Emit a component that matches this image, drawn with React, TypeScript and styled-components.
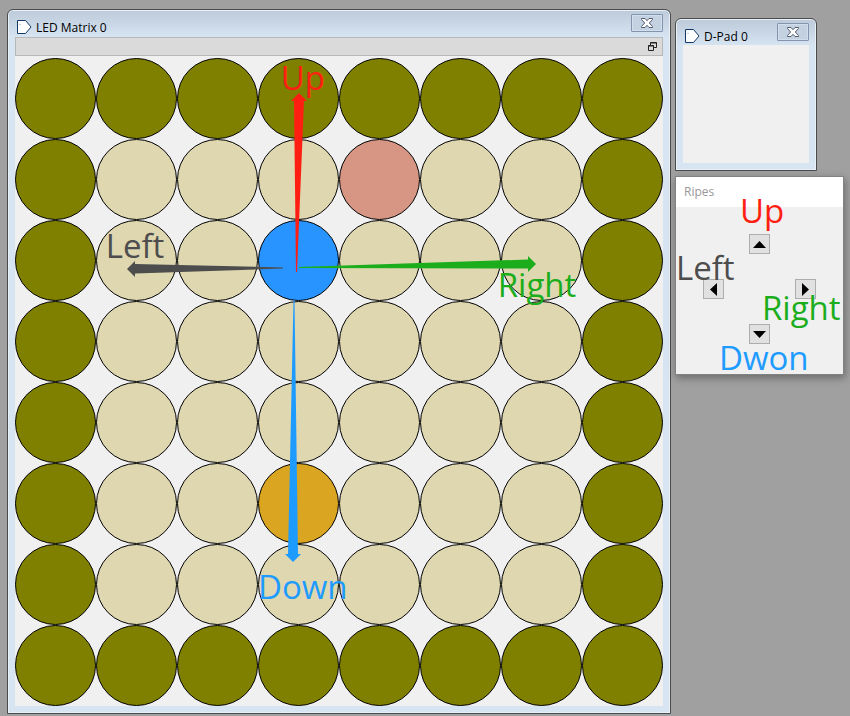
import React from "react";
import styled, { createGlobalStyle } from "styled-components";

const GlobalStyle = createGlobalStyle`
  * { box-sizing: border-box; }
  body {
    margin: 0;
    background: #a0a0a0;
    color: #000;
    font: 12px/16px "Open Sans", "Noto Sans", sans-serif;
  }
  button { font: inherit; padding: 0; margin: 0; }
`;

const colors = {
  wall: "#808000",
  floor: "#ded7b0",
  player: "#2894ff",
  box: "#daa520",
  goal: "#d79584",
  up: "#ff1f12",
  down: "#1e9bff",
  left: "#4d4d4d",
  right: "#1cad1c",
};

const Desktop = styled.main`
  display: grid;
  grid-template-columns: minmax(0, 1fr) 169px;
  align-items: start;
  gap: 4px;
  min-height: 100vh;
  padding: 9px 6px 2px 7px;
`;

const SideColumn = styled.div`
  display: flex;
  flex-direction: column;
  align-items: flex-start;
  gap: 5px;
  padding-top: 9px;
`;

const Frame = styled.section<{ $width?: string }>`
  width: ${(p) => p.$width ?? "100%"};
  padding: 0 7px 7px;
  border: 1px solid #4b4b4b;
  border-radius: 6px 6px 0 0;
  background: linear-gradient(#bccad9, #d7e4f2 27px);
  box-shadow: inset 0 0 0 1px #e8f0f8;
`;

const TitleBar = styled.header`
  display: flex;
  align-items: flex-start;
  height: 26px;
  padding: 4px 0 0 1px;
`;

const WindowIcon = styled.svg`
  flex: none;
  width: 16px;
  height: 16px;
  margin-top: 5px;
`;

const Title = styled.h1`
  flex: 1;
  margin: 6px 0 0 4px;
  font-size: 12px;
  font-weight: 400;
  white-space: nowrap;
`;

const CloseButton = styled.button`
  display: grid;
  place-items: center;
  width: 32px;
  height: 18px;
  border: 1px solid #8493ae;
  border-radius: 1px;
  background: #c3d1e0;
  box-shadow: inset 0 0 0 1px #d1deeb;
`;

const ToolBar = styled.div`
  display: flex;
  align-items: center;
  justify-content: flex-end;
  height: 19px;
  margin-top: 1px;
  padding-right: 5px;
  border: 1px solid #b8b8b8;
  background: #dadada;
`;

const FloatButton = styled.button`
  display: grid;
  place-items: center;
  width: 10px;
  height: 10px;
  border: 0;
  background: none;
`;

const Content = styled.div`
  padding-top: 2px;
  background: #f0f0f0;
`;

const EmptyPane = styled.div`
  height: 118px;
  background: #f0f0f0;
`;

const Matrix = styled.div`
  position: relative;
  display: grid;
  grid-template-columns: repeat(8, 1fr);
`;

const Led = styled.div<{ $color: string }>`
  aspect-ratio: 1;
  border: 1px solid #000;
  border-radius: 50%;
  background: ${(p) => p.$color};
`;

const Arrows = styled.svg`
  position: absolute;
  inset: 0;
  width: 100%;
  height: 100%;
  pointer-events: none;
`;

const Note = styled.span<{ $color: string; $x: string; $y: string }>`
  position: absolute;
  left: ${(p) => p.$x};
  top: ${(p) => p.$y};
  color: ${(p) => p.$color};
  font-size: 33px;
  line-height: 40px;
  white-space: nowrap;
  pointer-events: none;
`;

const Popup = styled.section`
  width: 100%;
  border: 1px solid #828282;
  background: #f0f0f0;
  box-shadow: 1px 3px 8px rgba(0, 0, 0, 0.35);
`;

const PopupTitle = styled.h2`
  margin: 0;
  padding: 7px 8px;
  background: #fff;
  color: #999;
  font-size: 12px;
  line-height: 16px;
  font-weight: 400;
`;

const Pad = styled.div`
  position: relative;
  display: grid;
  grid-template-columns: repeat(3, 21px);
  grid-template-rows: repeat(3, 20px);
  gap: 25px;
  height: 167px;
  padding: 27px 0 0 27px;
`;

const PadButton = styled.button<{ $col: number; $row: number }>`
  grid-column: ${(p) => p.$col};
  grid-row: ${(p) => p.$row};
  display: grid;
  place-items: center;
  border: 1px solid #adadad;
  background: #e1e1e1;
`;

const board = [
  "WWWWWWWW",
  "W...G..W",
  "W..P...W",
  "W......W",
  "W......W",
  "W..B...W",
  "W......W",
  "WWWWWWWW",
];

const ledColors: Record<string, string> = {
  W: colors.wall,
  ".": colors.floor,
  P: colors.player,
  B: colors.box,
  G: colors.goal,
};

const padButtons = [
  { name: "Up", col: 2, row: 1, points: "-1,9 12,9 5.5,2" },
  { name: "Left", col: 1, row: 2, points: "9,-1 9,12 2,5.5" },
  { name: "Right", col: 3, row: 2, points: "2,-1 2,12 9,5.5" },
  { name: "Down", col: 2, row: 3, points: "-1,2 12,2 5.5,9" },
];

function WindowTitle({ text }: { text: string }) {
  return (
    <TitleBar>
      <WindowIcon viewBox="0 0 16 16" aria-hidden="true">
        <path d="M1.5 1.5H9.5L15 8L9.5 14.5H1.5Z" fill="#fff" stroke="#123a66" />
        <path d="M3 5.5H5M4 4.5V6" stroke="#c9d3dc" />
      </WindowIcon>
      <Title>{text}</Title>
      <CloseButton type="button" aria-label={`Close ${text}`}>
        <svg width="12" height="10" viewBox="0 0 12 10" aria-hidden="true">
          <path
            d="M0.5 0.5H4L6 2.7L8 0.5H11.5V1.5L8.3 5L11.5 8.5V9.5H8L6 7.3L4 9.5H0.5V8.5L3.7 5L0.5 1.5Z"
            fill="#fff"
            stroke="#505a70"
          />
        </svg>
      </CloseButton>
    </TitleBar>
  );
}

export default function App() {
  return (
    <>
      <GlobalStyle />
      <Desktop>
        <Frame>
          <WindowTitle text="LED Matrix 0" />
          <ToolBar>
            <FloatButton type="button" aria-label="Float panel">
              <svg width="9" height="9" viewBox="0 0 9 9" fill="none" stroke="#222" aria-hidden="true">
                <path d="M2.5 3V0.5H8.5V5.5H6M2 1H9" />
                <path d="M0.5 3.5H5.5V8.5H0.5ZM0 4H6" />
              </svg>
            </FloatButton>
          </ToolBar>
          <Content>
            <Matrix>
              {board.flatMap((row, y) =>
                [...row].map((cell, x) => <Led key={`${x}-${y}`} $color={ledColors[cell]} />)
              )}
              <Arrows viewBox="0 0 648 648" aria-hidden="true">
                <polygon fill={colors.up} points="284,35 292,43 289,43 282,214 281,214 279,43 276,43" />
                <polygon fill={colors.left} points="112,211 120,203 120,206 268,209.5 268,210.5 120,215.5 120,219" />
                <polygon fill={colors.right} points="521,206 513,198 513,201.5 284,209 284,210 513,210.5 513,214" />
                <polygon fill={colors.down} points="278,504 270,496 273,496 278.5,242 279.5,242 283,496 286,496" />
              </Arrows>
              <Note $color={colors.up} $x="41%" $y="0%">Up</Note>
              <Note $color={colors.left} $x="14%" $y="26%">Left</Note>
              <Note $color={colors.right} $x="74.5%" $y="32%">Right</Note>
              <Note $color={colors.down} $x="37.5%" $y="78.5%">Down</Note>
            </Matrix>
          </Content>
        </Frame>
        <SideColumn>
          <Frame $width="142px">
            <WindowTitle text="D-Pad 0" />
            <EmptyPane />
          </Frame>
          <Popup>
            <PopupTitle>Ripes</PopupTitle>
            <Pad>
              {padButtons.map((b) => (
                <PadButton key={b.name} type="button" aria-label={b.name} $col={b.col} $row={b.row}>
                  <svg width="13" height="12" viewBox="-1 -1 13 12" overflow="visible" aria-hidden="true">
                    <polygon points={b.points} />
                  </svg>
                </PadButton>
              ))}
              <Note $color={colors.up} $x="64px" $y="-16px">Up</Note>
              <Note $color={colors.left} $x="0px" $y="41px">Left</Note>
              <Note $color={colors.right} $x="86px" $y="81px">Right</Note>
              <Note $color={colors.down} $x="43px" $y="131px">Dwon</Note>
            </Pad>
          </Popup>
        </SideColumn>
      </Desktop>
    </>
  );
}
